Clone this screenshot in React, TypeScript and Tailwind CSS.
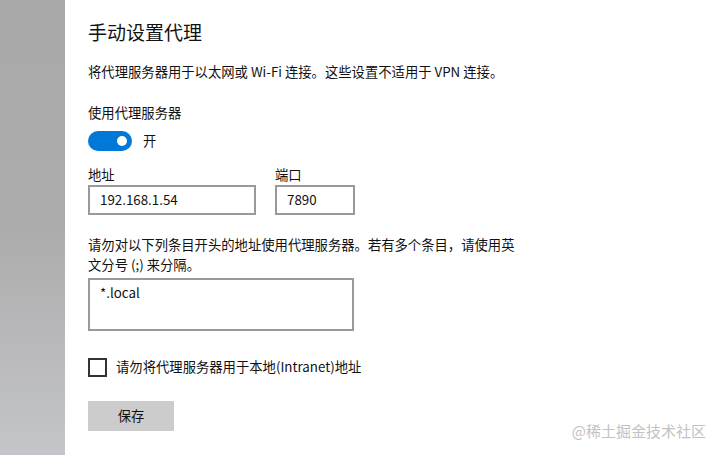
const font = "font-['Segoe_UI','Noto_Sans_CJK_SC',sans-serif]";

function Toggle({ on }: { on: boolean }) {
  return (
    <div className="flex items-center gap-[11px]">
      <div className={`flex h-[20px] w-[44px] items-center rounded-full px-[5px] ${on ? 'justify-end bg-[#0078d7]' : 'justify-start border-2 border-black bg-white'}`}>
        <div className={`h-[10px] w-[10px] rounded-full ${on ? 'bg-white' : 'bg-black'}`} />
      </div>
      <span className="leading-5">{on ? '开' : '关'}</span>
    </div>
  );
}

function Field({ label, value, width }: { label: string; value: string; width: string }) {
  return (
    <div className="flex flex-col">
      <span className="leading-5">{label}</span>
      <div className={`flex h-[30px] items-center border-2 border-[#999999] bg-white pl-[10px] ${width}`}>
        {value}
      </div>
    </div>
  );
}

export default function App() {
  return (
    <div className={`flex h-[455px] w-[720px] overflow-hidden bg-white text-[13.33px] text-[#111111] ${font}`}>
      <div className="w-[65px] shrink-0 bg-gradient-to-b from-[#a9a9a9] via-[#acacac] to-[#c4c5c9]" />

      <div className="relative flex flex-1 flex-col pl-[23px] pt-[18px]">
        <h1 className="text-[19px] leading-[28px]">手动设置代理</h1>

        <p className="mt-[16px] leading-5">将代理服务器用于以太网或 Wi-Fi 连接。这些设置不适用于 VPN 连接。</p>

        <p className="mt-[21px] leading-5">使用代理服务器</p>
        <div className="mt-[8px]">
          <Toggle on />
        </div>

        <div className="mt-[14px] flex gap-[19px]">
          <Field label="地址" value="192.168.1.54" width="w-[168px]" />
          <Field label="端口" value="7890" width="w-[80px]" />
        </div>

        <p className="mt-[20px] w-[430px] leading-5">
          请勿对以下列条目开头的地址使用代理服务器。若有多个条目，请使用英文分号 (;) 来分隔。
        </p>

        <div className="mt-[3px] h-[53px] w-[266px] border-2 border-[#999999] bg-white pl-[10px] pt-[3px] leading-5">
          *.local
        </div>

        <label className="mt-[26px] flex items-center gap-[9px]">
          <span className="h-[19px] w-[19px] border-2 border-[#333333] bg-white" />
          <span className="leading-5">请勿将代理服务器用于本地(Intranet)地址</span>
        </label>

        <button
          type="button"
          className="mt-[24px] flex h-[30px] w-[86px] items-center justify-center bg-[#cccccc] leading-5"
        >
          保存
        </button>

        <span className="absolute bottom-[13px] right-[14px] text-[15px] text-[#c2c2c2]">@稀土掘金技术社区</span>
      </div>
    </div>
  );
}
